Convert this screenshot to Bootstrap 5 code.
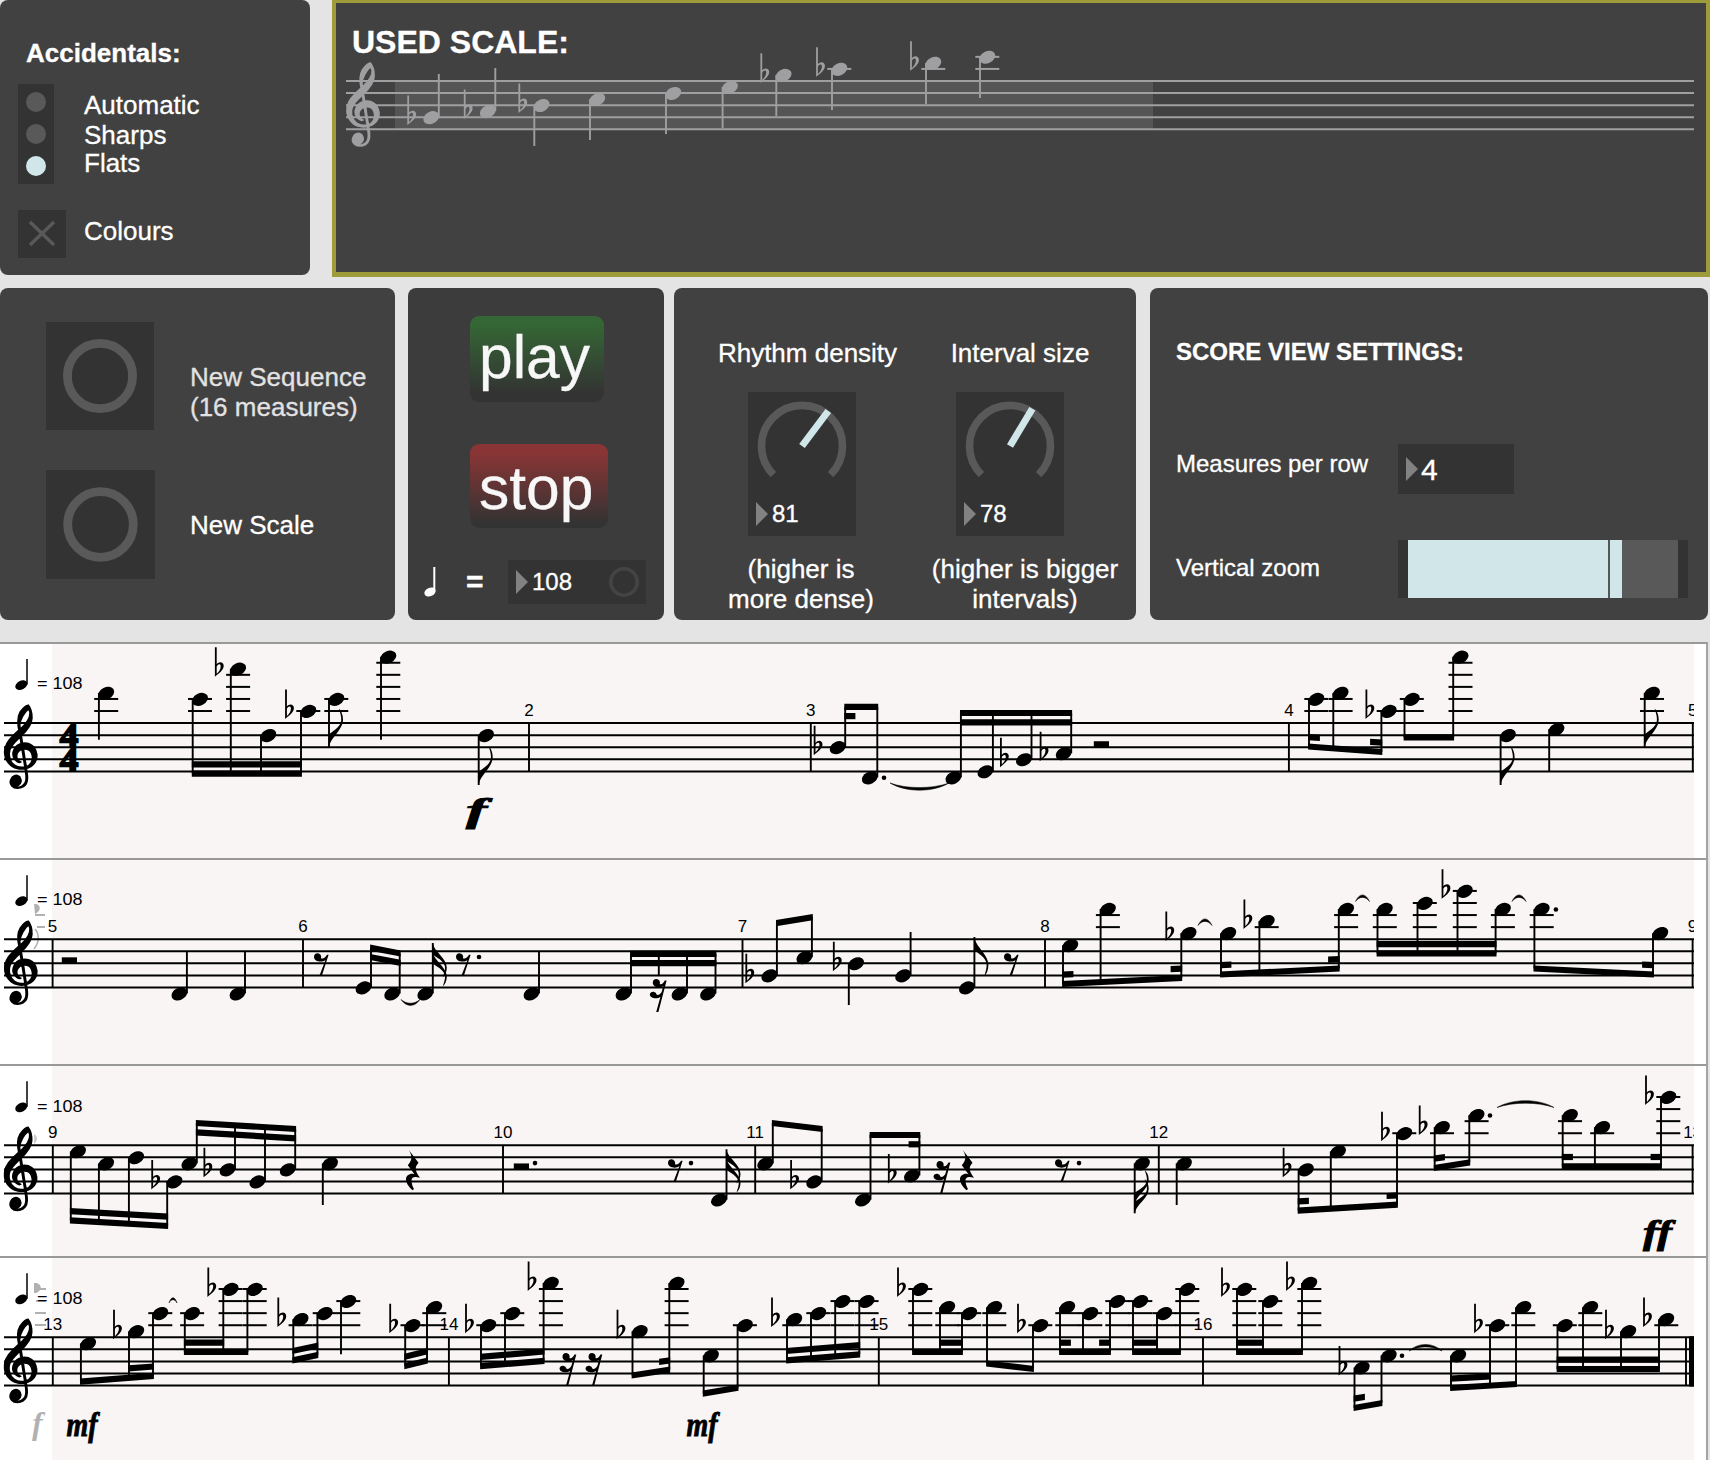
<!DOCTYPE html>
<html lang="en">
<head>
<meta charset="utf-8">
<meta name="viewport" content="width=device-width, initial-scale=1">
<title>Sequence generator</title>
<link href="https://cdn.jsdelivr.net/npm/bootstrap@5.3.0/dist/css/bootstrap.min.css" rel="stylesheet">
<style>
body{background:#e4e4e4;font-family:"Liberation Sans",Arial,sans-serif;color:#fff;font-size:26px;line-height:30px;width:1710px;height:1460px;overflow:hidden;-webkit-text-stroke:.3px currentColor}
svg{display:block}
main svg text{-webkit-text-stroke:0}
.panel{background:#414141;border-radius:8px;height:332px}
.well{background:#333}
.top-strip{height:288px}
.acc-panel{width:310px;height:275px;padding:38px 18px 0}
.radio-col{width:36px;height:100px;padding:8px}
.dot-opt{width:20px;height:20px;border-radius:50%;background:#595959}
.dot-opt.on{background:#d0e6e9}
.lbl-col{padding:6px 0 0 30px}
.scale-panel{width:1378px;height:277px;border:4px solid #9d9b3a;border-top-width:3px;border-bottom-width:5px;background:#414141}
.scale-title{font-size:32px;line-height:36px;padding:21px 0 0 16px;height:55px}
.seq-panel{width:395px;padding:34px 0 0 46px}
.bang{width:108px;height:108px}
.transport{width:256px;background:#3c3c3c;padding:28px 0 0 62px}
.btn-big{width:134px;height:86px;border:0;border-radius:9px;font-size:60.5px;line-height:68px;color:#f7f7f7;padding:0 0 5px 9px;text-align:left;background:linear-gradient(#356635 10%,#333 90%)}
.btn-stop{width:138px;height:84px;padding:4px 0 0 9px;background:linear-gradient(#8a3535 10%,#333 95%)}
.num24{font-size:24px;line-height:28px}
.tri{width:0;height:0;border-left:12px solid #828282;border-top:12px solid transparent;border-bottom:12px solid transparent}
.knobs{width:462px;padding:50px 0 0}
.dial{width:108px;height:144px}
.settings{width:557.5px;padding:50px 0 0 26px;font-size:24px;line-height:28px}
.slider{width:290px;height:58px;padding:0 10px}
.score-row{border-top:2px solid #999;border-right:2px solid #a4a4a4;background:#fff;width:1708px;overflow:hidden}
</style>
</head>
<body>
<div class="top-strip d-flex align-items-start justify-content-between">
  <section class="panel acc-panel">
    <div class="fw-bold ps-2">Accidentals:</div>
    <div class="d-flex mt-3">
      <div class="well radio-col d-flex flex-column" style="gap:12px"><span class="dot-opt"></span><span class="dot-opt"></span><span class="dot-opt on"></span></div>
      <div class="lbl-col"><div>Automatic</div><div style="height:28px">Sharps</div><div>Flats</div></div>
    </div>
    <div class="d-flex" style="margin-top:26px">
      <svg class="well" width="48" height="48"><path d="M12 12L36 35M36 12L12 35" stroke="#595959" stroke-width="3.4"/></svg>
      <div style="padding:6px 0 0 18px">Colours</div>
    </div>
  </section>
  <section class="scale-panel">
    <div class="scale-title fw-bold">USED SCALE:</div>
    <svg id="scale" width="1370" height="200" viewBox="336 58 1370 200" style="overflow:visible"></svg>
  </section>
</div>

<div class="d-flex" style="height:354px">
  <section class="panel seq-panel">
    <div class="d-flex">
      <svg class="well bang" viewBox="0 0 108 108"><circle cx="54" cy="54" r="32.6" fill="none" stroke="#595959" stroke-width="8.8"/></svg>
      <div style="padding:40px 0 0 36px;color:#e2e2e2">New Sequence<br>(16 measures)</div>
    </div>
    <div class="d-flex" style="margin-top:40px">
      <svg class="well" width="109" height="109"><circle cx="54.5" cy="54.5" r="32.8" fill="none" stroke="#595959" stroke-width="8.8"/></svg>
      <div style="padding:40px 0 0 35px">New Scale</div>
    </div>
  </section>
  <section class="panel transport" style="margin-left:13px">
    <button class="btn-big d-block">play</button>
    <button class="btn-big btn-stop d-block" style="margin-top:42px">stop</button>
    <div class="d-flex align-items-start" style="margin:32px 0 0 -48px">
      <svg width="46" height="44" viewBox="422 560 46 44"><ellipse cx="430" cy="592" rx="5.9" ry="4.2" transform="rotate(-25 430 592)" fill="#fff"/><path d="M434.3 591V567" stroke="#fff" stroke-width="2"/></svg>
      <div class="fw-bold" style="width:40px;font-size:30px;line-height:34px;padding-top:5px;margin-left:-2px">=</div>
      <div class="well d-flex align-items-center num24" style="width:138px;height:44px;padding-left:8px;margin-left:2px">
        <span class="tri"></span><span style="padding-left:4px;width:80px">108</span>
        <svg width="34" height="32"><circle cx="16" cy="16" r="13.2" fill="none" stroke="#444" stroke-width="3.6"/></svg>
      </div>
    </div>
  </section>
  <section class="panel knobs d-flex" style="margin-left:10px">
    <div class="text-center" style="width:254px">
      <div style="margin-left:13px">Rhythm density</div>
      <div class="well dial" style="margin:24px 0 0 74px">
        <svg width="108" height="106"><path d="M25.4 82.6A40.5 40.5 0 1 1 82.6 82.6" fill="none" stroke="#595959" stroke-width="7.6"/><path d="M54 54L80.3 19" stroke="#d0e6e9" stroke-width="7"/></svg>
        <div class="d-flex align-items-center num24" style="padding:2px 0 0 8px"><span class="tri"></span><span style="padding-left:4px">81</span></div>
      </div>
      <div style="margin-top:18px">(higher is<br>more dense)</div>
    </div>
    <div class="text-center" style="width:208px">
      <div style="margin-left:-24px">Interval size</div>
      <div class="well dial" style="margin:24px 0 0 28px">
        <svg width="108" height="106"><path d="M25.4 82.6A40.5 40.5 0 1 1 82.6 82.6" fill="none" stroke="#595959" stroke-width="7.6"/><path d="M54 54L76.3 16.7" stroke="#d0e6e9" stroke-width="7"/></svg>
        <div class="d-flex align-items-center num24" style="padding:2px 0 0 8px"><span class="tri"></span><span style="padding-left:4px">78</span></div>
      </div>
      <div style="margin:18px 14px 0 0">(higher is bigger<br>intervals)</div>
    </div>
  </section>
  <section class="panel settings" style="margin-left:14px">
    <div class="fw-bold">SCORE VIEW SETTINGS:</div>
    <div class="d-flex" style="margin-top:78px">
      <div style="width:222px;padding-top:6px">Measures per row</div>
      <div class="well d-flex align-items-center" style="width:116px;height:50px;padding-left:8px"><span class="tri"></span><span style="font-size:30px;line-height:34px;padding:1px 0 0 3px">4</span></div>
    </div>
    <div class="d-flex" style="margin-top:46px">
      <div style="width:222px;padding-top:14px">Vertical zoom</div>
      <div class="well slider d-flex">
        <div style="width:200px;background:#d0e6e9"></div><div style="width:2px;background:#555"></div><div style="width:12px;background:#d0e6e9"></div><div class="flex-grow-1" style="background:#595959"></div>
      </div>
    </div>
  </section>
</div>

<main>
  <div class="score-row"><svg id="r1" width="1706" height="214" viewBox="0 644 1706 214"></svg></div>
  <div class="score-row"><svg id="r2" width="1706" height="204" viewBox="0 860 1706 204"></svg></div>
  <div class="score-row"><svg id="r3" width="1706" height="190" viewBox="0 1066 1706 190"></svg></div>
  <div class="score-row"><svg id="r4" width="1706" height="202" viewBox="0 1258 1706 202"></svg></div>
</main>

<script>
const SP = 12.07, ST = SP / 2;
const CLEF = 'M12.049,3.5296c0.305,3.1263-2.019,5.6563-4.0772,7.7014-0.9349,0.897-0.155,0.148-0.6437,0.594-0.1022-0.479-0.2986-1.731-0.2802-2.11,0.1304-2.6939,2.3198-6.5875,4.2381-8.0236,0.309,0.5767,0.563,0.6231,0.763,1.8382zm0.651,16.142c-1.232-0.906-2.85-1.144-4.3336-0.885-0.1913-1.255-0.3827-2.51-0.574-3.764,2.3506-2.329,4.9066-5.0322,5.0406-8.5394,0.059-2.232-0.276-4.6714-1.678-6.4836-1.7004,0.12823-2.8995,2.156-3.8019,3.4165-1.4889,2.6705-1.1414,5.9169-0.57,8.7965-0.8094,0.952-1.9296,1.743-2.7274,2.734-2.3561,2.308-4.4085,5.43-4.0046,8.878,0.18332,3.334,2.5894,6.434,5.8702,7.227,1.2457,0.315,2.5639,0.346,3.8241,0.099,0.2199,2.25,1.0266,4.629,0.0925,6.813-0.7007,1.598-2.7875,3.004-4.3325,2.192-0.5994-0.316-0.1137-0.051-0.478-0.252,1.0698-0.257,1.9996-1.036,2.26-1.565,0.8378-1.464-0.3998-3.639-2.1554-3.358-2.262,0.046-3.1904,3.14-1.7356,4.685,1.3468,1.52,3.833,1.312,5.4301,0.318,1.8125-1.18,2.0395-3.544,1.8325-5.562-0.07-0.678-0.403-2.67-0.444-3.387,0.697-0.249,0.209-0.059,1.193-0.449,2.66-1.053,4.357-4.259,3.594-7.122-0.318-1.469-1.044-2.914-2.302-3.792zm0.561,5.757c0.214,1.991-1.053,4.321-3.079,4.96-0.136-0.795-0.172-1.011-0.2626-1.475-0.4822-2.46-0.744-4.987-1.116-7.481,1.6246-0.168,3.4576,0.543,4.0226,2.184,0.244,0.577,0.343,1.197,0.435,1.812zm-5.1486,5.196c-2.5441,0.141-4.9995-1.595-5.6343-4.081-0.749-2.153-0.5283-4.63,0.8207-6.504,1.1151-1.702,2.6065-3.105,4.0286-4.543,0.183,1.127,0.366,2.254,0.549,3.382-2.9906,0.782-5.0046,4.725-3.215,7.451,0.5324,0.764,1.9765,2.223,2.7655,1.634-1.102-0.683-2.0033-1.859-1.8095-3.227-0.0821-1.282,1.3699-2.911,2.6513-3.198,0.4384,2.869,0.9413,6.073,1.3797,8.943-0.5054,0.1-1.0211,0.143-1.536,0.143z';
const FLAT = 'M0 0H1.8V17C4 14 8.8 14.3 8.8 18.6C8.8 22.6 4.5 26 0 29.5ZM1.8 19.3V26.6C4 24.6 5.8 22 5.8 19.2C5.8 16.4 3.2 16.6 1.8 19.3Z';
const FLAG = 'M0 0C1 -10 14 -17 14 -28C14 -33 12 -37 10 -39C11 -35 12.6 -31 12.2 -27C11.5 -20 3 -16 0 -13Z';

/* Staff renderer: pitches are counted in half-spaces above the bottom line. */
class Staff {
  constructor(id, top, ink = '#000') { this.el = document.getElementById(id); this.top = top; this.bot = top + 4 * SP; this.ink = ink; this.out = ''; }
  y(p) { return this.bot - p * ST; }
  add(s) { this.out += s; return this; }
  line(x1, y1, x2, y2, w) { return this.add(`<path d="M${x1} ${y1}L${x2} ${y2}" stroke="${this.ink}" stroke-width="${w}"/>`); }
  staff(x1, x2, w = 2) { for (let i = 0; i < 5; i++) this.line(x1, this.top + i * SP, x2, this.top + i * SP, w); return this; }
  clef(x) { return this.add(`<path d="${CLEF}" transform="translate(${x} ${this.top - 17.8}) scale(2.1 2.03)" stroke="${this.ink}" stroke-width=".9"/><ellipse cx="${x + 11.4}" cy="${this.top + 57.5}" rx="5.4" ry="6"/>`); }
  note(x, p, dir, flat, dot) {
    const c = dir < 0 ? x + 7.3 : x - 7.5, y = this.y(p) + .4;
    this.add(`<ellipse cx="${c}" cy="${y}" rx="8.4" ry="6" transform="rotate(-27 ${c} ${y})"/>`);
    for (let q = 10; q <= p; q += 2) this.line(c - 12, this.y(q), c + 12, this.y(q), 2);
    if (flat) this.add(`<path d="${FLAT}" fill-rule="evenodd" transform="translate(${c - (dir < 0 ? 23.2 : 24)} ${y - 22})"/>`);
    if (dot) this.add(`<circle cx="${x + dot - 1}" cy="${y}" r="2.3"/>`);
    return this;
  }
  single(x, p, dir, end, o = {}) {
    this.note(x, p, dir, o.flat, o.dot).line(x, this.y(p), x, end, 1.9);
    for (let i = 0; i < (o.flags || 0); i++)
      this.add(`<path d="${FLAG}" transform="translate(${x} ${end + dir * 9 * i}) scale(1 ${-dir * (o.flags > 1 ? .88 : 1)})"/>`);
    return this;
  }
  /* beam yl / yr: centre of the outer beam; subs: [x1, x2] pieces of the inner beam */
  group(dir, yl, yr, notes, subs = []) {
    const a = notes[0][0], b = notes[notes.length - 1][0], f = x => yl + (yr - yl) * (x - a) / (b - a);
    notes.forEach(([x, p, flat, dot]) => { if (p !== null) this.note(x, p, dir, flat, dot); this.line(x, p === null ? flat : this.y(p), x, f(x), 1.9); });
    const bar = (x1, x2, o) => this.add(`<path d="M${x1 - .9} ${f(x1) + o - 3.1}L${x2 + .9} ${f(x2) + o - 3.1}V${f(x2) + o + 3.1}L${x1 - .9} ${f(x1) + o + 3.1}Z"/>`);
    bar(a, b, 0);
    if (subs === 1) subs = [[a, b]];
    subs.forEach(([x1, x2]) => bar(x1, x2, dir < 0 ? -9.3 : 9.3));
    return this;
  }
  bar(x, n) { this.line(x, this.top, x, this.bot, 1.9); return n ? this.add(`<text x="${x}" y="${this.top - 7.3}" text-anchor="middle">${n}</text>`) : this; }
  rest2(x, dot) { this.add(`<rect x="${x}" y="${this.top + 2 * SP - 6}" width="15.2" height="6"/>`); return dot ? this.add(`<circle cx="${dot}" cy="${this.top + 17.8}" r="2.3"/>`) : this; }
  rest4(x) { return this.add(`<path transform="translate(${x} ${this.top + 5})" d="M3 0L12.5 12.5C8.5 17 8.7 20 14 27.5C8 25.5 5.5 27 5.5 30C5.5 34 7 37 8 38.6L6.5 40C2 36 0 32 0 29C0 25 4.5 22.5 8.5 24L1.8 15C6 10 6.6 6 3 0Z"/>`); }
  rest8(x, dot) { this.add(`<path transform="translate(${x} ${this.top + 14})" d="M3.6 0A3.7 3.8 0 0 1 7 5C9.5 6 12 3.5 13 1.5H14.6L8 22H5.6L11.4 7C8 9.5 0 8.5 0 3.8A3.6 3.8 0 0 1 3.6 0Z"/>`); return dot ? this.add(`<circle cx="${dot}" cy="${this.top + 17.8}" r="2.3"/>`) : this; }
  rest16(x, y) { return this.add(`<path transform="translate(${x - .5} ${y})" d="M6.6 0A3.7 3.8 0 0 1 10 5C12 6 14 3.5 15 1.5H16.8L8.6 33H6.4L10.6 18C7 20.5 0 19.5 0 15A3.7 3.8 0 0 1 7 15.8C9 16.4 11 14.6 11.8 13L13.6 7C10 9.5 3 8.5 3 3.8A3.6 3.8 0 0 1 6.6 0Z"/>`); }
  tie(x1, x2, y, h) { const w = x2 - x1; return this.add(`<path d="M${x1} ${y}C${x1 + w * .28} ${y + h * 1.1} ${x2 - w * .28} ${y + h * 1.1} ${x2} ${y}C${x2 - w * .28} ${y + h * 1.75} ${x1 + w * .28} ${y + h * 1.75} ${x1} ${y}Z" stroke="${this.ink}" stroke-width=".5"/>`); }
  dyn(x, y, s, w) { return this.add(`<text x="${x}" y="${y}" textLength="${w}" lengthAdjust="spacingAndGlyphs" stroke="#000" stroke-width=".9" style="font:italic bold 34px 'Liberation Serif',serif">${s}</text>`); }
  tempo() {
    const t = this.top;
    return this.add(`<ellipse cx="21.3" cy="${t - 38}" rx="6.4" ry="4.4" transform="rotate(-27 21.3 ${t - 38})"/><text x="37" y="${t - 33.8}" textLength="45.5" lengthAdjust="spacingAndGlyphs">= 108</text>`).line(27, t - 38.5, 27, t - 64, 1.5);
  }
  sheet() { return this.add(`<rect x="52" y="640" width="1642" height="830" fill="#f8f5f4"/>`); }
  done(over = '') { this.el.innerHTML = `<g fill="${this.ink}" font-family="Liberation Sans, Arial, sans-serif" font-size="17">${this.out}</g>${over}`; }
}
const EDGE = '<rect x="1694" y="640" width="12" height="830" fill="#fff"/>';

/* scale display */
const s = new Staff('scale', 81, '#9f9fa2');
s.add('<rect x="395" y="81" width="758" height="48" fill="#555"/>').staff(346, 1694).clef(347)
 .single(438.8, 2, 1, 74, {flat: 1}).single(495.3, 3, 1, 68, {flat: 1}).single(534.3, 4, -1, 146, {flat: 1})
 .single(590, 5, -1, 140).single(666, 6, -1, 134).single(722.6, 7, -1, 128).single(776.3, 9, -1, 116, {flat: 1})
 .single(832, 10, -1, 110, {flat: 1}).single(926, 11, -1, 104, {flat: 1}).single(980, 12, -1, 98).done();

/* measures 1-4 */
const FOUR = 'font:bold 33px \'Liberation Serif\',serif';
const a = new Staff('r1', 723.1);
a.sheet().staff(4, 1694).clef(4.8).tempo()
 .add(`<text x="59.8" y="746.5" textLength="18.5" lengthAdjust="spacingAndGlyphs" style="${FOUR}" stroke="#000" stroke-width="1.8">4</text><text x="59.8" y="770.8" textLength="18.5" lengthAdjust="spacingAndGlyphs" style="${FOUR}" stroke="#000" stroke-width="1.8">4</text>`)
 .single(98.9, 13, -1, 739.7)
 .group(-1, 773.7, 773.7, [[192.7, 12], [230.8, 17, 1], [261, 6], [301, 10, 1]], 1)
 .single(329, 12, -1, 747.5, {flags: 1}).single(381, 19, -1, 739.7).single(478.7, 6, -1, 785, {flags: 1})
 .dyn(466, 821.5, 'f', 21).bar(529, 2).bar(810.8, 3)
 .group(1, 706.8, 706.8, [[845.2, 4, 1], [877.3, -1, 0, 7.7]], [[845.2, 854.5]])
 .tie(890, 949, 783, 5.5)
 .group(1, 713, 713, [[960.9, -1], [992.9, 0], [1031.5, 2, 1], [1071.2, 3, 1]], 1)
 .rest2(1093.8).bar(1288.9, 4)
 .group(-1, 746.5, 752, [[1309, 12], [1333.3, 13], [1381.4, 10, 1]], [[1309, 1319], [1371, 1381.4]])
 .group(-1, 737.4, 737.4, [[1404.5, 12], [1453.2, 19]])
 .single(1500.6, 6, -1, 785, {flags: 1}).single(1549.2, 7, -1, 771).single(1644.7, 13, -1, 747.5, {flags: 1})
 .bar(1692.8, 5).done(EDGE);

/* measures 5-8 */
const b = new Staff('r2', 939.2);
b.sheet().add('<g opacity=".3"><path d="M34 904C41 903 42 911 35 914ZM35 914H45V916H35ZM37 926H45V928H37Z"/><path d="M35 929C40 935 39 943 34 949" fill="none" stroke="#000" stroke-width="1.5"/></g>')
 .staff(4, 1694).clef(4.8).tempo().bar(52.6, 5).rest2(61.8)
 .single(186.9, -1, 1, 951).single(245, -1, 1, 951).bar(303, 6).rest8(314)
 .group(1, 947.7, 953.5, [[371, 0], [399.7, -1]], 1).tie(401, 420, 999.5, 4.5)
 .single(432.8, -1, 1, 943, {flags: 2}).rest8(456, 479).single(539, -1, 1, 951)
 .group(1, 953.8, 953.8, [[631, -1], [658.8, null, 975], [687, -1], [715.5, -1]], 1).rest16(650.3, 979)
 .bar(742.5, 7).group(1, 923.2, 917.2, [[776.9, 2, 1], [811.9, 5]])
 .single(848.8, 4, -1, 1005, {flat: 1}).single(910.6, 2, 1, 932).single(974.4, 0, 1, 937, {flags: 1}).rest8(1004)
 .bar(1045, 8)
 .group(-1, 984, 978, [[1063, 7], [1100.6, 13], [1181.3, 9, 1]], [[1063, 1072.5], [1171.5, 1181.3]])
 .tie(1198, 1212, 925.5, -5)
 .group(-1, 974.5, 968.5, [[1221, 9], [1259.4, 11, 1], [1338.8, 13]], [[1221, 1230.5], [1329, 1338.8]])
 .tie(1355.5, 1369.5, 901.5, -5)
 .group(-1, 953.5, 953.5, [[1377.5, 13], [1417.5, 14], [1457.5, 16, 1], [1495.6, 13]], 1)
 .tie(1512, 1526, 901.5, -5)
 .group(-1, 968.5, 974.5, [[1534.4, 13, 0, 22.5], [1653, 9]], [[1643, 1653]])
 .bar(1692.6, 9).done(EDGE);

/* measures 9-12 */
const c = new Staff('r3', 1145.3);
c.sheet().add('<path d="M34 1134C38 1136 38 1141 34 1144Z" opacity=".2"/>')
 .staff(4, 1694).clef(4.6).tempo().bar(52.8, 9)
 .group(-1, 1220.4, 1226, [[70.8, 7], [98.9, 5], [128.9, 6], [167.2, 2, 1]], 1)
 .group(1, 1123, 1129, [[196.8, 5], [235, 4, 1], [265, 2], [295.2, 4]], 1)
 .single(322.8, 5, -1, 1205).rest4(406).bar(503, 10).rest2(513.8, 535).rest8(668, 691)
 .single(726.5, -1, 1, 1149.3, {flags: 2}).bar(755.2, 11)
 .group(1, 1123, 1129, [[772.8, 5], [821.7, 2, 1]])
 .group(1, 1135, 1135, [[870.5, -1], [919.4, 3, 1]], [[909.5, 919.4]])
 .rest16(934, 1161).rest4(960).rest8(1055, 1079)
 .single(1134.7, 5, -1, 1213.3, {flags: 2}).bar(1158.8, 12).single(1176.7, 5, -1, 1205)
 .group(-1, 1210.7, 1204.7, [[1298.6, 4, 1], [1330.8, 7], [1397, 10, 1]], [[1298.6, 1308], [1387.5, 1397]])
 .group(-1, 1168, 1162.3, [[1434.7, 11, 1], [1469.3, 13, 0, 21.7]], [[1434.7, 1444]])
 .tie(1497, 1554, 1107.5, -5.2)
 .group(-1, 1166.3, 1166.3, [[1562.7, 13], [1594.9, 11], [1661, 16, 1]], [[1562.7, 1572], [1651.5, 1661]])
 .dyn(1643, 1243.5, 'ff', 29).bar(1692.6, 13).done(EDGE);

/* measures 13-16 */
const d = new Staff('r4', 1337.3);
d.sheet().add(`<g opacity=".3"><path d="M34 1283C41 1282 44 1290 36 1293L34 1293ZM36 1288H46V1290H36ZM36 1300H46V1302H36ZM35 1312H46V1314H35ZM35 1324H46V1326H35Z"/><text x="32" y="1434" style="font:italic bold 32px 'Liberation Serif',serif">f</text></g>`)
 .staff(4, 1694).clef(4.6).tempo().bar(52.8, 13).dyn(66.5, 1435.5, 'mf', 31)
 .group(-1, 1381.7, 1375.8, [[80.9, 7], [129, 9, 1], [153, 12]], [[129, 153]])
 .tie(169, 177, 1303, -4)
 .group(-1, 1352, 1352, [[184.8, 12], [223.3, 16, 1], [247.4, 16]], [[184.8, 223.3]])
 .group(-1, 1360.3, 1354.8, [[293.3, 11, 1], [317.4, 12]], 1)
 .single(341, 14, -1, 1354.3)
 .group(-1, 1366.2, 1360.5, [[405.2, 10, 1], [427, 13]], 1).bar(448.9, 14)
 .group(-1, 1366.2, 1360.8, [[481, 10, 1], [505, 12], [543.6, 17, 1]], 1)
 .rest16(560, 1353).rest16(586, 1353)
 .group(-1, 1375.5, 1369.7, [[632.5, 9, 1], [669.3, 17]], [[660, 669.3]])
 .group(-1, 1393.7, 1387.7, [[703.7, 5], [737.6, 10]]).dyn(686.5, 1435.5, 'mf', 31)
 .group(-1, 1360.3, 1354.3, [[787, 11, 1], [811, 12], [835.2, 14], [859.3, 14]], 1).bar(878.8, 15)
 .group(-1, 1352, 1352, [[913, 16, 1], [940, 13], [962, 12]], [[940, 962]])
 .group(-1, 1363.5, 1369, [[987, 13], [1033, 10, 1]])
 .group(-1, 1352, 1352, [[1060, 13], [1083, 12], [1110, 14]], [[1060, 1070], [1100, 1110]])
 .group(-1, 1352, 1352, [[1133, 14], [1157, 12], [1180, 16]], [[1133, 1157]]).bar(1203, 16)
 .group(-1, 1352, 1352, [[1237, 16, 1], [1263, 14], [1302, 17, 1]], [[1237, 1263]])
 .group(-1, 1408, 1403, [[1354.5, 3, 1], [1381.5, 5, 0, 21.5]], [[1354.5, 1364]])
 .tie(1409, 1442, 1351, -5)
 .group(-1, 1388, 1384, [[1451, 5], [1490, 10, 1], [1516, 13]], [[1451, 1490]])
 .group(-1, 1369, 1369, [[1557.5, 10], [1583, 13], [1621, 9, 1], [1659, 11, 1]], 1)
 .line(1686, 1337.3, 1686, 1385.6, 1.9).line(1691.5, 1336.4, 1691.5, 1386.5, 5).done(EDGE);
</script>
<script src="https://cdn.jsdelivr.net/npm/bootstrap@5.3.0/dist/js/bootstrap.bundle.min.js"></script>
</body>
</html>
